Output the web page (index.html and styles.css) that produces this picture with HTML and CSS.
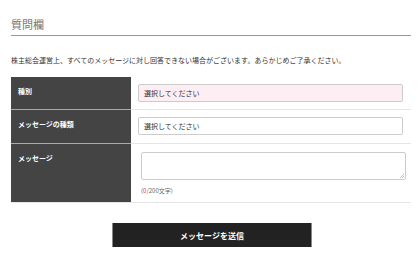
FILE: index.html
```html
<!DOCTYPE html>
<html lang="ja">
<head>
<meta charset="utf-8">
<link rel="stylesheet" href="styles.css">
</head>
<body>
<div class="page">
  <h2 class="title">質問欄</h2>
  <p class="notice">株主総会運営上、すべてのメッセージに対し回答できない場合がございます。あらかじめご了承ください。</p>
  <div class="form">
    <div class="label">種別</div>
    <div class="field"><div class="select pink">選択してください</div></div>
    <div class="label">メッセージの種類</div>
    <div class="field"><div class="select">選択してください</div></div>
    <div class="label">メッセージ</div>
    <div class="field field-msg">
      <div class="textarea"><svg class="grip" width="5" height="5" viewBox="0 0 5 5"><path d="M1 5L5 1M3 5L5 3" stroke="#aaa" stroke-width="0.7"/></svg></div>
      <div class="count">(<span class="red">0</span>/200文字)</div>
    </div>
  </div>
  <div class="actions"><button class="submit">メッセージを送信</button></div>
</div>
</body>
</html>
```
FILE: styles.css
```css
* { box-sizing: border-box; }
body {
  margin: 0;
  background: #fff;
  font-family: "Noto Sans CJK JP", "Noto Sans", sans-serif;
  color: #333;
}
.page { padding: 0 9px 0 11px; }
.title {
  margin: 0;
  padding-top: 16px;
  font-size: 11px;
  font-weight: normal;
  color: #777;
  line-height: 16px;
  padding-bottom: 3px;
  border-bottom: 1px solid #999;
}
.notice {
  margin: 19px 0 0;
  font-size: 7px;
  line-height: 10px;
  color: #333;
}
.form {
  margin-top: 12px;
  display: grid;
  grid-template-columns: 120px 1fr;
  grid-template-rows: 33px 34px 58px;
  border-bottom: 1px solid #e6e6e6;
}
.label {
  background: #444;
  color: #fff;
  font-weight: bold;
  font-size: 7px;
  line-height: 10px;
  padding: 9px 7px;
  border-bottom: 1px solid #aaa;
}
.label:nth-last-child(2) { border-bottom: none; }
.field {
  padding: 7px 8px 0 7px;
  border-bottom: 1px solid #e6e6e6;
}
.field:last-child { border-bottom: none; }
.select {
  height: 18px;
  border: 1px solid #ccc;
  border-radius: 2px;
  font-size: 7px;
  line-height: 16px;
  padding-left: 5px;
  color: #333;
  background: #fff;
}
.select.pink { background: #fdeef4; }
.field-msg { padding: 8px 5px 0 10px; }
.textarea {
  height: 28px;
  border: 1px solid #ccc;
  border-radius: 2px;
  position: relative;
}
.grip { position: absolute; right: 1px; bottom: 1px; }
.count {
  margin-top: 7px;
  font-size: 6px;
  line-height: 8px;
  color: #666;
}
.red { color: #d33; }
.actions {
  display: flex;
  justify-content: center;
  margin-top: 20px;
}
.submit {
  width: 200px;
  height: 24px;
  background: #222;
  border: 1px solid #888;
  border-width: 0 1px;
  color: #fff;
  font-family: "Noto Sans CJK JP", sans-serif;
  font-weight: bold;
  font-size: 8px;
  margin-left: 2px;
}
```
